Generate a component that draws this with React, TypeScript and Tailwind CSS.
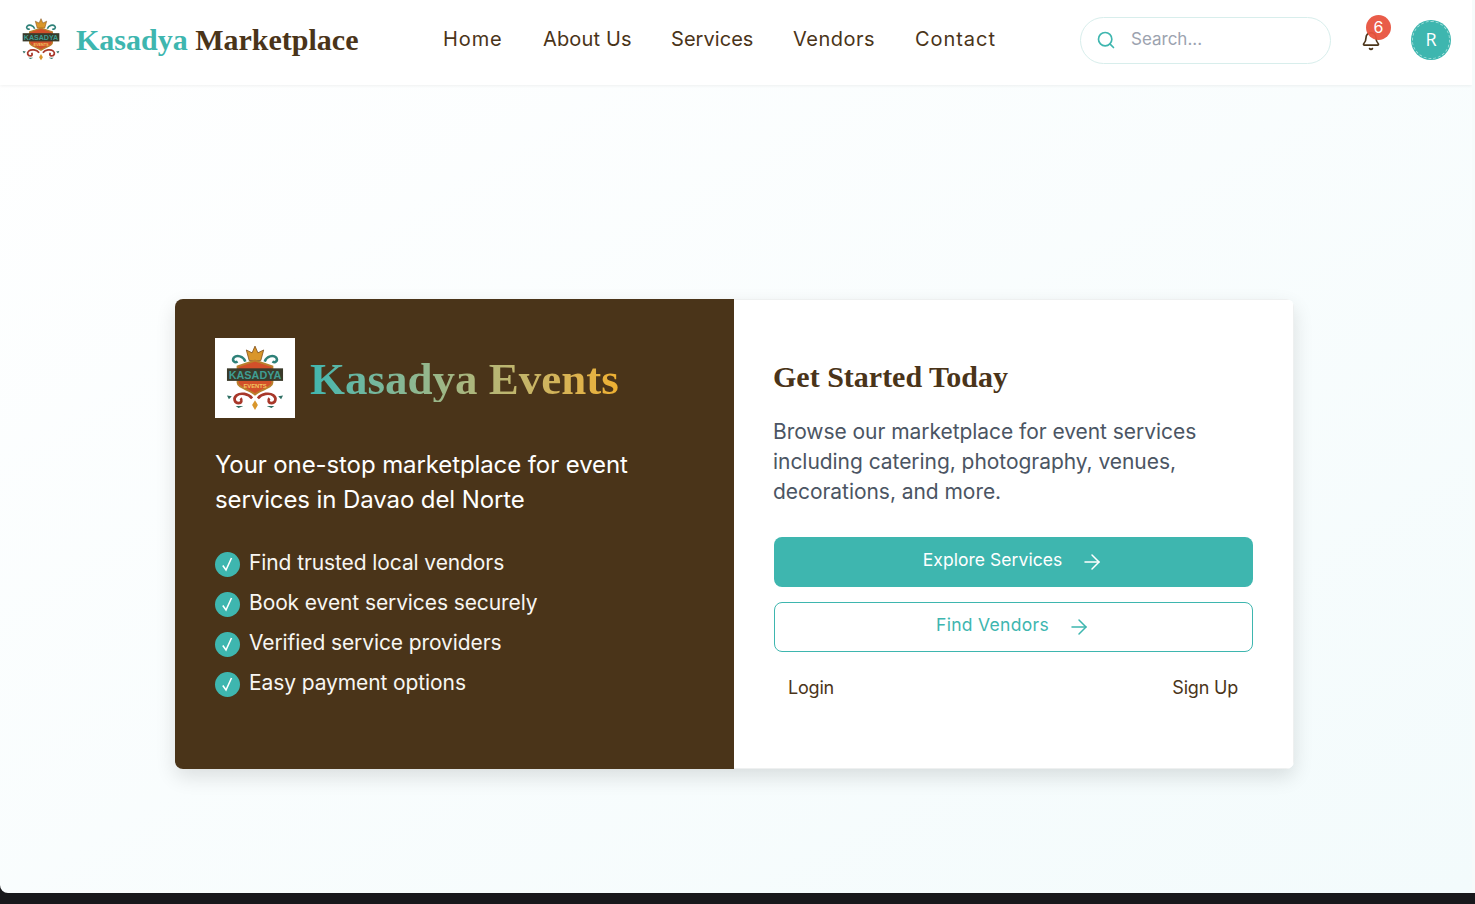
import { ArrowRight, Bell, Search } from "lucide-react";

const navLinks = [
  { label: "Home", className: "w-[60px] tracking-[0.9px]" },
  { label: "About Us", className: "w-[88px] tracking-[0.15px]" },
  { label: "Services", className: "w-[82px] tracking-[0.05px]" },
  { label: "Vendors", className: "w-[82px] tracking-[0.5px]" },
  { label: "Contact", className: "w-[81px] tracking-[0.95px]" },
];

const perks = [
  "Find trusted local vendors",
  "Book event services securely",
  "Verified service providers",
  "Easy payment options",
];

const Crest = ({ className }: { className: string }) => (
  <svg viewBox="10 5 60 68" className={className}>
    <path d="M40 6l3 7 6-3-3 11H34l-3-11 6 3z" fill="#d9962b" stroke="#7a4a18" strokeWidth="0.8" />
    <path d="M30 22c-2-6-9-7-12-4-2 3 1 6 4 4M50 22c2-6 9-7 12-4 2 3-1 6-4 4" fill="none" stroke="#2e8078" strokeWidth="2.6" />
    <path d="M22 27 40 21l18 6v17c0 5-12 7-18 12-6-5-18-7-18-12z" fill="#d2502a" stroke="#b9802c" strokeWidth="2" />
    <rect x="11" y="29" width="58" height="13" fill="#3a3a2a" />
    <text x="40" y="40" textAnchor="middle" fontFamily="Liberation Sans, sans-serif" fontWeight="700" fontSize="11.2" fill="#3f9d92">KASADYA</text>
    <text x="40" y="49" textAnchor="middle" fontFamily="Liberation Sans, sans-serif" fontWeight="700" fontSize="6" fill="#f3c560">EVENTS</text>
    <path d="M37 60c-4-5-12-6-16-3-4 3-2 8 2 8 3 0 4-3 2-5" fill="none" stroke="#a8382a" strokeWidth="2.8" />
    <path d="M43 60c4-5 12-6 16-3 4 3 2 8-2 8-3 0-4-3-2-5" fill="none" stroke="#a8382a" strokeWidth="2.8" />
    <path d="M11 57l5 1-3 3zM69 57l-5 1 3 3zM20 68h8l-5 2zM60 68h-8l5 2z" fill="#2e6f63" />
    <path d="M40 62l3 5-3 5-3-5z" fill="#d9962b" />
  </svg>
);

const Header = () => (
  <header className="h-[85px] shrink-0 flex items-center bg-white shadow-[0_1px_3px_rgba(0,0,0,0.06)] pl-[22px] pr-[21px] relative">
    <Crest className="w-[38px] h-[43px] -mt-[7px]" />
    <div className="ml-[16px] w-[282px] -mt-[6px] whitespace-nowrap font-['Liberation_Serif',serif] font-bold text-[30px] leading-none">
      <span className="text-[#3eb6af]">Kasadya</span> <span className="text-[#4a3419]">Marketplace</span>
    </div>
    <nav className="ml-[85px] flex gap-[40px] font-['Inter',sans-serif] text-[20px] text-[#4a3419] -mt-[8px]">
      {navLinks.map((link) => (
        <a key={link.label} className={`whitespace-nowrap ${link.className}`}>
          {link.label}
        </a>
      ))}
    </nav>
    <div className="ml-auto w-[251px] h-[47px] rounded-full border border-[#d8eeec] flex items-center pl-[15px] -mt-[5px]">
      <Search className="w-[20px] h-[20px] text-[#3eb6af]" strokeWidth={2} />
      <span className="ml-[15px] font-['Inter',sans-serif] text-[17px] text-[#9ca3af]">Search...</span>
    </div>
    <div className="relative ml-[30px] -mt-[4px]">
      <Bell className="w-[20px] h-[20px] text-[#4a3419]" strokeWidth={2} />
      <span className="absolute -top-[16px] left-[5px] w-[25px] h-[25px] rounded-full bg-[#e8533f]/95 text-white flex items-center justify-center font-['Inter',sans-serif] text-[16px]">
        6
      </span>
    </div>
    <div className="ml-[30px] -mt-[5px] w-[40px] h-[40px] rounded-full bg-[#3eb6af] outline-1 outline-dashed -outline-offset-2 outline-[#a5dfdb] text-white flex items-center justify-center font-['Open_Sans',sans-serif] text-[18px] pb-[2px]">
      R
    </div>
  </header>
);

const LeftPanel = () => (
  <div className="w-[559px] bg-[#4a3419] pl-[40px] pt-[39px] text-white">
    <div className="flex items-center">
      <div className="w-[80px] h-[80px] bg-white flex items-center justify-center">
        <Crest className="w-[58px] h-[66px]" />
      </div>
      <h1 className="ml-[15px] mt-[2px] font-['Liberation_Serif',serif] font-bold text-[45px] leading-none whitespace-nowrap bg-gradient-to-r from-[#3eb6af] to-[#efb02f] bg-clip-text text-transparent">
        Kasadya Events
      </h1>
    </div>
    <p className="mt-[29px] w-[440px] font-['Inter',sans-serif] text-[24px] leading-[35px] tracking-[-0.1px]">
      Your one-stop marketplace for event services in Davao del Norte
    </p>
    <ul className="mt-[31px] flex flex-col gap-[10px]">
      {perks.map((perk) => (
        <li key={perk} className="h-[30px] flex items-center gap-[9px] font-['Inter',sans-serif] text-[21px] tracking-[-0.1px] text-[#f8f6f2]">
          <span className="w-[25px] h-[25px] rounded-full bg-[#3eb6af] flex items-center justify-center mt-[2px]">
            <svg viewBox="0 0 25 25" className="w-[25px] h-[25px]">
              <path d="M7.8 13.5 11 18l5.5-12" fill="none" stroke="white" strokeWidth="1.6" />
            </svg>
          </span>
          {perk}
        </li>
      ))}
    </ul>
  </div>
);

const RightPanel = () => (
  <div className="w-[560px] bg-white border-y border-r border-[#eef0f0] pl-[40px] pr-[40px] pt-[57px]">
    <h2 className="-ml-px font-['Liberation_Serif',serif] font-bold text-[30px] leading-[40px] text-[#4a3419]">
      Get Started Today
    </h2>
    <p className="-ml-px mt-[20px] font-['Inter',sans-serif] text-[21px] leading-[30px] text-[#4b5563] tracking-[-0.05px] whitespace-nowrap">
      Browse our marketplace for event services
      <br />
      including catering, photography, venues,
      <br />
      decorations, and more.
    </p>
    <button className="mt-[30px] w-full h-[50px] rounded-lg bg-[#3eb6af] text-white flex items-center justify-center font-['Inter',sans-serif] text-[17.5px] tracking-[0.05px]">
      <span className="-mt-[3px]">Explore Services</span>
      <ArrowRight className="ml-[18px] w-[24px] h-[24px]" strokeWidth={1.5} />
    </button>
    <button className="mt-[15px] w-full h-[50px] rounded-lg border border-[#3eb6af] bg-white text-[#3eb6af] flex items-center justify-center font-['Inter',sans-serif] text-[17.5px] tracking-[0.3px]">
      <span className="-mt-[3px]">Find Vendors</span>
      <ArrowRight className="ml-[18px] w-[24px] h-[24px]" strokeWidth={1.5} />
    </button>
    <div className="mt-[22px] pl-[14px] pr-[15px] flex justify-between font-['Inter',sans-serif] text-[18px] tracking-[-0.2px] text-[#4a3419]">
      <a>Login</a>
      <a>Sign Up</a>
    </div>
  </div>
);

export default function App() {
  return (
    <div className="h-[904px] bg-[#18181b] overflow-hidden flex flex-col">
      <div className="h-[893px] flex">
        <div className="w-[1472px] flex flex-col rounded-bl-lg overflow-hidden bg-gradient-to-br from-white to-[#f3fbfc]">
          <Header />
          <main className="flex-1 pt-[214px] pl-[175px]">
            <div className="w-[1119px] h-[470px] flex rounded-lg overflow-hidden shadow-[0_8px_20px_rgba(0,0,0,0.12)]">
              <LeftPanel />
              <RightPanel />
            </div>
          </main>
        </div>
        <div className="w-[3px] bg-[#f6fbfb]" />
      </div>
    </div>
  );
}
